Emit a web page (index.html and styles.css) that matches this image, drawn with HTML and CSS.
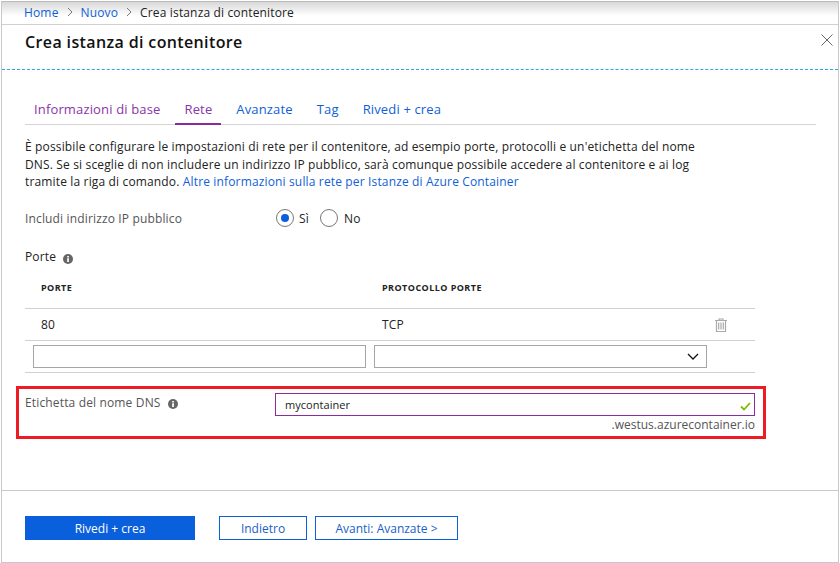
FILE: index.html
```html
<!DOCTYPE html>
<html lang="it">
<head>
<meta charset="utf-8">
<title>Crea istanza di contenitore</title>
<link rel="stylesheet" href="styles.css">
</head>
<body>
<div class="frame">
  <nav class="crumbs">
    <a class="link" href="#">Home</a>
    <svg class="chev" viewBox="0 0 8 10"><path d="M2 1l4 4-4 4" fill="none" stroke="#777" stroke-width="1"/></svg>
    <a class="link" href="#">Nuovo</a>
    <svg class="chev" viewBox="0 0 8 10"><path d="M2 1l4 4-4 4" fill="none" stroke="#777" stroke-width="1"/></svg>
    <span>Crea istanza di contenitore</span>
  </nav>
  <header class="head">
    <h1>Crea istanza di contenitore</h1>
    <svg class="close" viewBox="0 0 12 12"><path d="M.5.5l11 11M11.500.5l-11 11" fill="none" stroke="#666" stroke-width="1"/></svg>
  </header>
  <main class="body">
    <div class="tabs">
      <span class="tab visited">Informazioni di base</span>
      <span class="tab visited active">Rete</span>
      <span class="tab">Avanzate</span>
      <span class="tab">Tag</span>
      <span class="tab">Rivedi + crea</span>
    </div>
    <p class="intro">È possibile configurare le impostazioni di rete per il contenitore, ad esempio porte, protocolli e un'etichetta del nome DNS. Se si sceglie di non includere un indirizzo IP pubblico, sarà comunque possibile accedere al contenitore e ai log tramite la riga di comando. <a class="link" href="#">Altre informazioni sulla rete per Istanze di Azure Container</a></p>
    <div class="ip-row">
      <span class="muted ip-label">Includi indirizzo IP pubblico</span>
      <span class="radio on"></span><span class="radio-text">Sì</span>
      <span class="radio"></span><span class="radio-no">No</span>
    </div>
    <div class="ports-label">Porte
      <svg class="info" viewBox="0 0 10 10"><circle cx="5" cy="5" r="5" fill="#666"/><rect x="4.2" y="4.2" width="1.7" height="3.8" fill="#fff"/><rect x="4.2" y="2" width="1.7" height="1.5" fill="#fff"/></svg>
    </div>
    <div class="table">
      <div class="row row-head"><span>PORTE</span><span>PROTOCOLLO PORTE</span></div>
      <div class="row row-data"><span>80</span><span>TCP</span>
        <svg class="trash" viewBox="0 0 12 14"><path d="M0 2.500h12M4 2.500V1h4v1.500M1.500 2.500V13.500h9V2.500" fill="none" stroke="#aaa" stroke-width="1.200"/><path d="M3.700 4.500v7M6 4.500v7M8.300 4.500v7" fill="none" stroke="#aaa" stroke-width="1.200"/></svg>
      </div>
      <div class="row row-inputs">
        <span class="field"></span>
        <span class="field select"><svg class="caret" viewBox="0 0 12 7"><path d="M1 1l5 5 5-5" fill="none" stroke="#111" stroke-width="1.300"/></svg></span>
      </div>
    </div>
    <div class="dns">
      <div class="dns-grid">
        <span class="muted dns-label">Etichetta del nome DNS
          <svg class="info" viewBox="0 0 10 10"><circle cx="5" cy="5" r="5" fill="#666"/><rect x="4.2" y="4.2" width="1.7" height="3.8" fill="#fff"/><rect x="4.2" y="2" width="1.7" height="1.5" fill="#fff"/></svg>
        </span>
        <div class="dns-value">
          <div class="dns-input"><span class="dns-text">mycontainer</span>
            <svg class="check" viewBox="0 0 11 9"><path d="M1 4.500l3 3 6-6.500" fill="none" stroke="#7fba00" stroke-width="1.800"/></svg>
          </div>
          <div class="suffix">.westus.azurecontainer.io</div>
        </div>
      </div>
    </div>
  </main>
  <footer class="foot">
    <button class="btn primary">Rivedi + crea</button>
    <button class="btn back">Indietro</button>
    <button class="btn next">Avanti: Avanzate &gt;</button>
  </footer>
</div>
</body>
</html>
```

FILE: styles.css
```css
* { box-sizing: border-box; }
html, body { margin: 0; padding: 0; background: #fff; }
body { width: 840px; height: 563px; overflow: hidden; padding: 1px 0 0 1px; font-family: "Open Sans", "Noto Sans", "Liberation Sans", sans-serif; font-size: 12px; letter-spacing: .15px; color: #222; }
.frame { width: 838px; height: 562px; border: 1px solid #c8c8c8; border-top-color: #bbb; display: flex; flex-direction: column; }
.link { color: #0f5fd7; text-decoration: none; }
.crumbs { height: 23px; padding: 0 0 2px 22px; display: flex; align-items: center; gap: 7px; border-bottom: 1px solid #d0d0d0; background: linear-gradient(#d8d8d8, #f4f4f4 45%, #fff 62%); flex: none; }
.chev { width: 8px; height: 10px; }
.head { height: 45px; flex: none; border-bottom: 1px dashed #2fa8d8; display: flex; justify-content: space-between; padding: 0 5px 0 23px; }
.head h1 { margin: 6px 0 0; font-size: 16px; line-height: 22px; font-weight: 600; letter-spacing: .37px; color: #111; }
.close { width: 12px; height: 12px; margin-top: 9px; }
.body { flex: 1; padding: 0 0 0 23px; border-bottom: 1px solid #c8c8c8; }
.tabs { margin-top: 26px; width: 791px; height: 29px; display: flex; gap: 6px; border-bottom: 1px solid #d4d4d4; font-size: 13px; }
.tab { color: #0f5fd7; padding: 0 9px; height: 29px; line-height: 26px; }
.visited { color: #8a35a8; }
.active { border-bottom: 2px solid #8a2ba0; }
.intro { margin: 13px 0 0; width: 680px; line-height: 17.5px; color: #222; }
.muted { color: #555; }
.ip-row { display: flex; align-items: center; margin-top: 17.5px; height: 20px; }
.ip-label { width: 251px; }
.radio { width: 18px; height: 18px; border: 1px solid #777; border-radius: 50%; margin-right: 5px; display: inline-flex; align-items: center; justify-content: center; }
.radio.on::after { content: ""; width: 8px; height: 8px; background: #0a5fdc; border-radius: 50%; }
.radio-text { width: 21px; }
.radio-no { margin-left: 1px; }
.ports-label { margin-top: 20px; height: 18px; line-height: 18px; display: flex; align-items: center; gap: 7px; }
.info { width: 10px; height: 10px; margin-top: 4px; }
.table { width: 730px; margin-top: 4px; }
.row { display: flex; border-bottom: 1px solid #d0d0d0; align-items: center; position: relative; }
.row-head { height: 39px; padding: 0 0 4px 16px; font-size: 9px; font-weight: 700; letter-spacing: .45px; color: #222; }
.row-head span:first-child { width: 341px; }
.row-data { height: 32px; padding-left: 16px; }
.row-data span:first-child { width: 341px; }
.trash { width: 12px; height: 14px; position: absolute; right: 28px; top: 9px; }
.row-inputs { height: 32px; padding: 4px 0 0 8px; gap: 8px; align-items: flex-start; }
.field { height: 23px; width: 333px; border: 1px solid #a6a6a6; display: flex; align-items: center; justify-content: flex-end; }
.select { padding-right: 7px; }
.caret { width: 12px; height: 7px; }
.dns { width: 750px; margin: 13px 0 0 -9px; height: 53px; border: 3px solid #ed1c24; padding: 4px 8px 0 6px; }
.dns-grid { display: flex; }
.dns-label { width: 250px; flex: none; display: flex; align-items: center; gap: 7px; height: 18px; }
.dns-value { width: 480px; flex: none; }
.dns-input { height: 23px; border: 1px solid #8a2ba0; display: flex; align-items: center; justify-content: space-between; padding: 0 3px 0 9px; }
.dns-text { font-size: 11px; letter-spacing: .05px; }
.check { width: 11px; height: 9px; margin-top: 3px; }
.suffix { text-align: right; color: #555; line-height: 18px; letter-spacing: 0; }
.foot { height: 71px; flex: none; padding: 25px 0 0 23px; display: flex; align-items: flex-start; }
.btn { height: 24px; font: 500 12px "Open Sans", "Noto Sans", sans-serif; background: #fff; border: 1px solid #0a5fdc; color: #1a5fc8; padding: 0; }
.primary { width: 170px; background: #0a5fdc; color: #fff; margin-right: 24px; }
.back { width: 88px; margin-right: 8px; }
.next { width: 143px; }
```
